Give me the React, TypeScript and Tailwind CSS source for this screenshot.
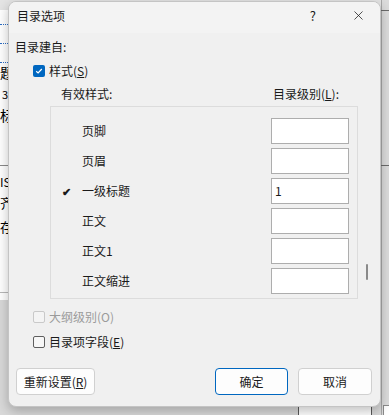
import { X } from "lucide-react";

const font = { fontFamily: '"Noto Sans CJK SC", "Noto Sans", sans-serif' };

type Row = { name: string; level: string; active?: boolean };

const rows: Row[] = [
  { name: "页脚", level: "" },
  { name: "页眉", level: "" },
  { name: "一级标题", level: "1", active: true },
  { name: "正文", level: "" },
  { name: "正文1", level: "" },
  { name: "正文缩进", level: "" },
];

function CheckBox({ checked, disabled }: { checked?: boolean; disabled?: boolean }) {
  if (checked) {
    return (
      <span className="flex h-[12px] w-[12px] items-center justify-center rounded-[2px] bg-[#0067c0]">
        <svg width="8" height="8" viewBox="0 0 8 8" fill="none">
          <path d="M1.2 4.2 L3.1 6 L6.8 2" stroke="white" strokeWidth="1.2" />
        </svg>
      </span>
    );
  }
  return (
    <span
      className={
        disabled
          ? "h-[12px] w-[12px] rounded-[2px] border border-[#c9c9c9] bg-[#f4f4f4]"
          : "h-[12px] w-[12px] rounded-[2px] border border-[#5f5f5f] bg-[#f7f7f7]"
      }
    />
  );
}

// bits of the document page peeking out behind the dialog
function Backdrop() {
  return (
    <>
      <div className="absolute left-0 top-0 h-[10px] w-full bg-[#e4e4e4]" />
      <div className="absolute left-0 top-[10px] h-[290px] w-[8px] bg-white" />
      <div className="absolute left-0 top-[24px] w-[8px] border-t border-dotted border-[#2b6cc4]" />
      <div className="absolute left-0 top-[43px] w-[8px] border-t border-dotted border-[#2b6cc4]" />
      <div className="absolute left-0 top-[62px] w-[8px] border-t border-dotted border-[#2b6cc4]" />
      <div className="absolute left-0 top-[65px] text-[14px] leading-none text-black">题</div>
      <div className="absolute left-[2px] top-[89px] text-[11px] leading-none text-black">3</div>
      <div className="absolute left-0 top-[108px] text-[14px] leading-none text-black">标</div>
      <div className="absolute left-0 top-[165px] w-[8px] border-t border-[#8a8a8a]" />
      <div className="absolute left-0 top-[176px] text-[12px] leading-none text-black">IS</div>
      <div className="absolute left-0 top-[196px] text-[13px] leading-none text-black">齐</div>
      <div className="absolute left-0 top-[220px] text-[13px] leading-none text-black">存(</div>
      <div className="absolute left-0 top-[292px] w-[8px] border-t border-[#b8b8b8]" />
      <div className="absolute right-0 top-0 h-full w-[8px] border-l border-[#a8a8a8] bg-[#dcdcdc]" />
      <div className="absolute right-0 top-[10px] w-[8px] border-t border-[#6a6a6a]" />
      <div className="absolute right-0 top-[165px] w-[8px] border-t border-[#6a6a6a]" />
      <div className="absolute left-[298px] top-[405px] h-[20px] w-[74px] border border-[#5a5a5a] bg-white" />
      <div className="absolute left-[383px] top-[405px] h-[20px] w-[10px] border border-[#8a8a8a] bg-white" />
    </>
  );
}

export default function App() {
  return (
    <div className="relative h-[415px] w-[389px] overflow-hidden bg-[#d9d9d9] text-[12px] text-[#1a1a1a]" style={font}>
      <Backdrop />

      <div className="absolute left-[8px] top-[1px] flex h-[406px] w-[373px] flex-col overflow-hidden rounded-[8px] border border-[#c4c4c4] bg-[#f0f0f0] shadow-[0_4px_12px_rgba(0,0,0,0.25)]">
        <div className="flex h-[31px] shrink-0 items-center bg-[#f3f3f3] pb-[4px] pl-[8px]">
          <span className="flex-1 text-[12px] leading-none">目录选项</span>
          <span className="mr-[35px] text-[13px] leading-none">?</span>
          <X size={15} strokeWidth={1.2} className="mr-[14px] text-[#1a1a1a]" />
        </div>

        <div className="flex flex-col pl-[6px] pr-[8px]">
          <div className="mt-[6px] flex h-[16px] items-center leading-none">目录建自:</div>

          <div className="ml-[18px] mt-[8px] flex h-[16px] items-center gap-[4px] leading-none">
            <CheckBox checked />
            <span>
              样式(<span className="underline">S</span>)
            </span>
          </div>

          <div className="mt-[7px] flex h-[16px] items-center leading-none">
            <span className="ml-[46px] w-[212px]">有效样式:</span>
            <span>
              目录级别(<span className="underline">L</span>):
            </span>
          </div>

          <div className="relative ml-[35px] mt-[4px] h-[193px] w-[308px] border border-[#dcdcdc] pt-[11px]">
            <div className="flex flex-col gap-[4px]">
              {rows.map((r) => (
                <div key={r.name} className="flex h-[26px] items-center">
                  <span className="w-[31px] pl-[11px] text-[11px] font-bold leading-none">{r.active ? "✔" : ""}</span>
                  <span className="w-[189px] leading-none">{r.name}</span>
                  <div className="flex h-[26px] w-[78px] items-center border border-[#adadad] bg-white pl-[3px] leading-none">
                    {r.level}
                  </div>
                </div>
              ))}
            </div>
            <div className="absolute left-[315px] top-[157px] h-[16px] w-[2px] rounded-full bg-[#8a8a8a]" />
          </div>

          <div className="ml-[18px] mt-[10px] flex h-[16px] items-center gap-[4px] leading-none text-[#9b9b9b]">
            <CheckBox disabled />
            <span>大纲级别(O)</span>
          </div>

          <div className="ml-[18px] mt-[9px] flex h-[16px] items-center gap-[4px] leading-none">
            <CheckBox />
            <span>
              目录项字段(<span className="underline">E</span>)
            </span>
          </div>

          <div className="mt-[18px] flex items-center">
            <button className="ml-[1px] flex h-[27px] w-[79px] items-center justify-center rounded-[4px] border border-[#d0d0d0] bg-[#fdfdfd] leading-none">
              重新设置(<span className="underline">R</span>)
            </button>
            <button className="ml-auto flex h-[27px] w-[73px] items-center justify-center rounded-[4px] border border-[#0067c0] bg-[#fdfdfd] leading-none">
              确定
            </button>
            <button className="ml-[10px] flex h-[27px] w-[74px] items-center justify-center rounded-[4px] border border-[#d0d0d0] bg-[#fdfdfd] leading-none">
              取消
            </button>
          </div>
        </div>
      </div>
    </div>
  );
}
